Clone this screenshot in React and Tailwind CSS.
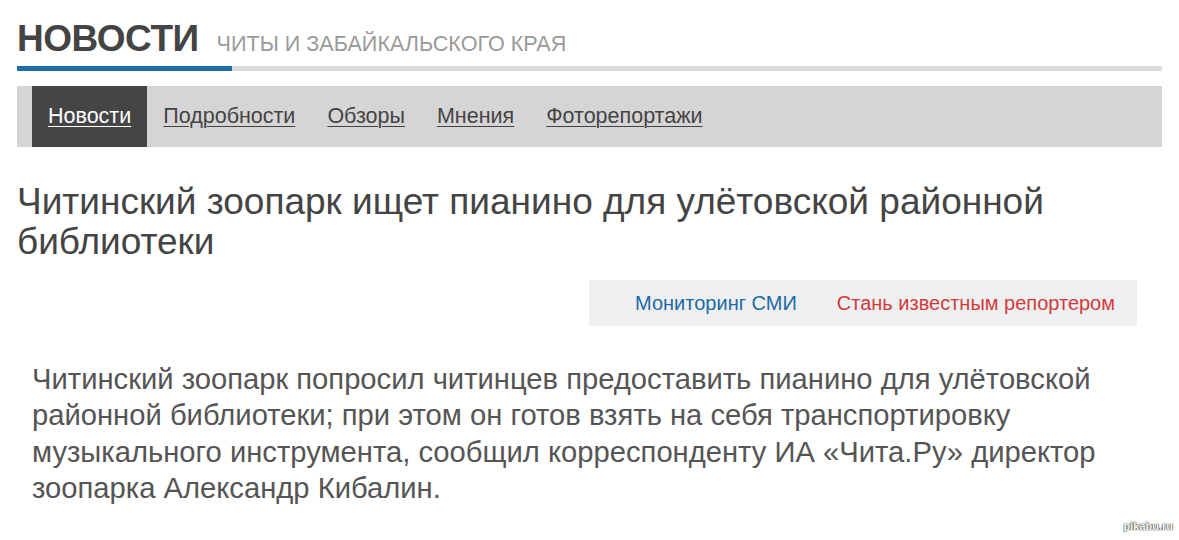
export default function App() {
  const nav = ["Новости", "Подробности", "Обзоры", "Мнения", "Фоторепортажи"];
  return (
    <div className="relative w-[1179px] h-[540px] bg-white overflow-hidden font-['Liberation_Sans',Arial,sans-serif]">
      <div className="px-[17px] pt-[18px]">
        <div className="flex items-baseline h-[42px]">
          <h1 className="text-[37px] leading-[42px] font-bold text-[#444444] tracking-[-0.5px]">НОВОСТИ</h1>
          <span className="ml-[18px] text-[21.6px] text-[#9a9a9a] uppercase">Читы и Забайкальского края</span>
        </div>
        <div className="mt-[6px] h-[5px] bg-[#dcdcdc] flex">
          <div className="w-[215px] bg-[#1c6ea4]" />
        </div>
        <nav className="mt-[15px] h-[61px] bg-[#d6d5d6] pl-[15px] flex">
          {nav.map((item, i) => (
            <a
              key={item}
              href="#"
              className={
                i === 0
                  ? "px-[16px] flex items-center bg-[#464545] text-white text-[21.5px] underline underline-offset-[3px] decoration-1"
                  : "px-[16px] flex items-center text-[#444444] text-[21.5px] underline underline-offset-[3px] decoration-1"
              }
            >
              {item}
            </a>
          ))}
        </nav>
        <h2 className="mt-[35px] text-[37px] leading-[40px] text-[#444444]">
          Читинский зоопарк ищет пианино для улётовской районной
          <br />
          библиотеки
        </h2>
        <div className="mt-[18px] ml-auto mr-[25px] w-[548px] h-[46px] bg-[#eeeff1] flex items-center justify-end pr-[22px] gap-[40px] text-[20px]">
          <a href="#" className="text-[#1e6aa5]">Мониторинг СМИ</a>
          <a href="#" className="text-[#d23b3b]">Стань известным репортером</a>
        </div>
        <p className="mt-[35px] pl-[15px] text-[29.2px] leading-[36.3px] text-[#555555]">
          Читинский зоопарк попросил читинцев предоставить пианино для улётовской
          <br />
          районной библиотеки; при этом он готов взять на себя транспортировку
          <br />
          музыкального инструмента, сообщил корреспонденту ИА «Чита.Ру» директор
          <br />
          зоопарка Александр Кибалин.
        </p>
      </div>
      <span className="absolute right-[6px] bottom-[6px] text-[11px] font-bold text-white [text-shadow:0_0_1px_#333,0_0_1px_#333,0_0_1px_#333]">
        pikabu.ru
      </span>
    </div>
  );
}
